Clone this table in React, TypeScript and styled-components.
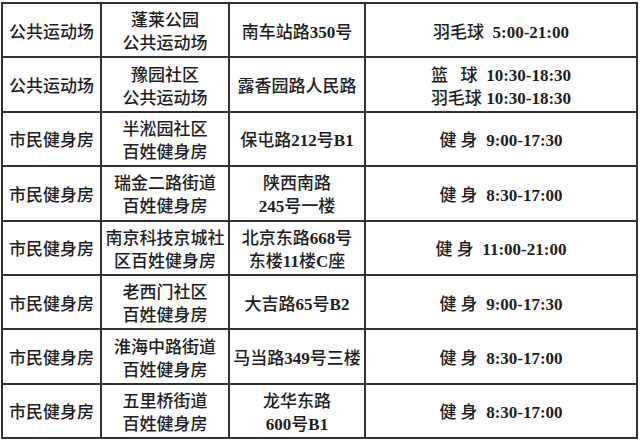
import React, { FC } from 'react'
import styled, { createGlobalStyle } from 'styled-components'

const GlobalStyle = createGlobalStyle`
  html, body {
    margin: 0;
    padding: 0;
    background: #ffffff;
  }
`

const Table = styled.div`
  display: grid;
  grid-template-columns: 99px 128px 136px 272px;
  grid-template-rows: repeat(8, 54.4px);
  margin: 2px 0 0 1px;
  width: max-content;
  border-left: 2px solid #333;
  border-top: 2px solid #333;
  color: #1e1e1e;
  font-family: "Liberation Serif", "Noto Sans CJK SC", serif;
  font-size: 17px;
  font-weight: 500;
`

const Cell = styled.div`
  box-sizing: border-box;
  border-right: 2px solid #333;
  border-bottom: 2px solid #333;
  display: flex;
  flex-direction: column;
  align-items: center;
  justify-content: center;
  text-align: center;
  line-height: 23px;
  padding-top: 4px;
  white-space: pre;
`

const TimeBlock = styled.div`
  display: flex;
  flex-direction: column;
  align-items: flex-start;
  text-align: left;
`

const Num = styled.span`
  font-weight: 700;
`

type Row = {
  type: string
  name: string[]
  address: string[]
  hours: string[]
}

const rows: Row[] = [
  { type: '公共运动场', name: ['蓬莱公园', '公共运动场'], address: ['南车站路350号'], hours: ['羽毛球  5:00-21:00'] },
  { type: '公共运动场', name: ['豫园社区', '公共运动场'], address: ['露香园路人民路'], hours: ['篮   球  10:30-18:30', '羽毛球 10:30-18:30'] },
  { type: '市民健身房', name: ['半淞园社区', '百姓健身房'], address: ['保屯路212号B1'], hours: ['健 身  9:00-17:30'] },
  { type: '市民健身房', name: ['瑞金二路街道', '百姓健身房'], address: ['陕西南路', '245号一楼'], hours: ['健 身  8:30-17:00'] },
  { type: '市民健身房', name: ['南京科技京城社', '区百姓健身房'], address: ['北京东路668号', '东楼11楼C座'], hours: ['健 身  11:00-21:00'] },
  { type: '市民健身房', name: ['老西门社区', '百姓健身房'], address: ['大吉路65号B2'], hours: ['健 身  9:00-17:30'] },
  { type: '市民健身房', name: ['淮海中路街道', '百姓健身房'], address: ['马当路349号三楼'], hours: ['健 身  8:30-17:00'] },
  { type: '市民健身房', name: ['五里桥街道', '百姓健身房'], address: ['龙华东路', '600号B1'], hours: ['健 身  8:30-17:00'] },
]

// digits and latin letters are set bold, like the original print
const Mixed: FC<{ text: string }> = ({ text }) => (
  <div>
    {text.split(/([0-9A-Za-z:\-]+)/).map((part, i) =>
      /^[0-9A-Za-z:\-]+$/.test(part) ? <Num key={i}>{part}</Num> : <span key={i}>{part}</span>
    )}
  </div>
)

const App: FC = () => {
  return (
    <>
      <GlobalStyle />
      <Table>
        {rows.map((row, i) => (
          <React.Fragment key={i}>
            <Cell>{row.type}</Cell>
            <Cell>
              {row.name.map((l) => <div key={l}>{l}</div>)}
            </Cell>
            <Cell>
              {row.address.map((l) => <Mixed key={l} text={l} />)}
            </Cell>
            <Cell>
              <TimeBlock>
                {row.hours.map((l) => <Mixed key={l} text={l} />)}
              </TimeBlock>
            </Cell>
          </React.Fragment>
        ))}
      </Table>
    </>
  )
}

export default App
